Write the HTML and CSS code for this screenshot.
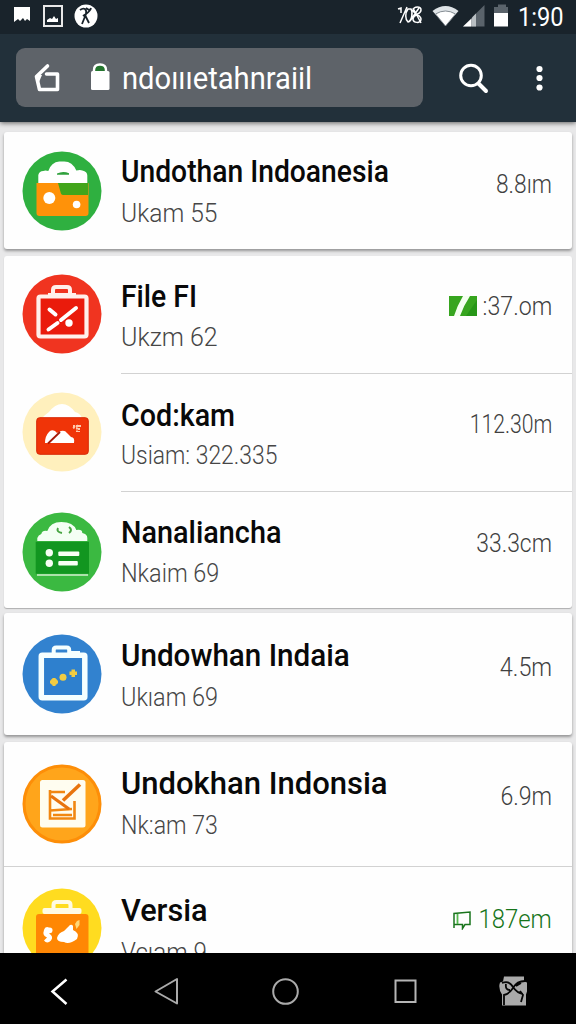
FILE: index.html
```
<!DOCTYPE html>
<html lang="id">
<head>
<meta charset="utf-8">
<title>Undothan Indoanesia</title>
<link rel="stylesheet" href="styles.css">
</head>
<body>
<div class="phone">
  <header class="top">
    <div class="status">
      <svg class="status-left" width="100" height="34" viewBox="0 0 100 34">
        <path fill="#fff" d="M14 7h16v14l-3-2-2 2-2-3-3 3-2-2-4 3z"/>
        <path fill="none" stroke="#e8e8e8" stroke-width="2" d="M44 6h18v20H44z"/>
        <path fill="#fff" d="M47 22v-2l3-2 2 1 2-3 2 3 2-1v4z"/>
        <circle cx="86" cy="16" r="11.500" fill="#fff"/>
        <path fill="none" stroke="#18222a" stroke-width="1.800" d="M80 10c4-3 7-1 6 4l-4 10M91 8c-1 4-4 5-8 8M85 15l4 8M86 8l3 2"/>
      </svg>
      <svg class="status-right" width="112" height="34" viewBox="396 0 112 34">
        <path fill="none" stroke="#fff" stroke-width="1.500" d="M398 9l3-1v5M407 7l-7 16M408 9c-3 4-3 10 0 13 4-1 5-10 3-13zM413 10c1-4 8-4 8 0 0 5-8 4-8 9 0 4 8 5 8 0 0-4-8-5-8-9M410 21l9-13M413 8l8 15"/>
        <path fill="#dfe4e7" d="M432.500 11Q445.500 1 458.500 11L445.500 26z"/>
        <path fill="#fff" stroke="#68727a" stroke-width=".8" d="M435.500 14Q445.500 8 455.500 14L445.500 26z"/>
        <path fill="#5a636b" d="M463 26.500L484.500 5v21.500z"/>
        <path fill="#fff" d="M463 26.500l8.500-8v8z"/>
        <path fill="#b9bfc3" d="M472 26.500v-9l4-4v13z"/>
        <path fill="#5a636b" d="M494 7h4V4.500h8V7h4v7h-16z"/>
        <path fill="#fff" d="M494 13h15.500v13.500H494z"/>
      </svg>
      <span class="clock"><span class="sx">1:90</span></span>
    </div>
    <div class="toolbar">
      <div class="address">
        <svg class="address-icons" width="100" height="59" viewBox="16 48 100 59">
          <path fill="none" stroke="#fff" stroke-width="3.600" stroke-linecap="round" stroke-linejoin="round" d="M47.500 66L36.500 76.500L39.500 89.500H57.500V74H46.500"/>
          <path fill="#fff" d="M36 75h6l-3 7z"/>
          <path fill="#25762f" d="M95 72v-3q0-4 5-4t5 4v3z"/>
          <path fill="none" stroke="#fff" stroke-width="2.400" d="M94 73v-3q0-5.500 6-5.500t6 5.500v3"/>
          <rect x="91" y="71" width="18.500" height="19" rx="1.500" fill="#fff"/>
        </svg>
        <span class="url"><span class="sx">ndoıııetahnraiil</span></span>
      </div>
      <svg class="tools" width="153" height="58" viewBox="423 48 153 58">
        <circle cx="471" cy="75.500" r="10.300" fill="none" stroke="#fff" stroke-width="3"/>
        <path stroke="#fff" stroke-width="4" stroke-linecap="round" d="M479 84l7 7"/>
        <g fill="#fff"><circle cx="539.500" cy="69" r="3.100"/><circle cx="539.500" cy="78" r="3.100"/><circle cx="539.500" cy="87.500" r="3.100"/></g>
      </svg>
    </div>
  </header>

  <main class="list">
    <section class="card card-a">
      <article class="row r1">
        <svg class="icon" viewBox="0 0 80 80">
          <circle cx="40" cy="40" r="39.500" fill="#2fb040"/>
          <path fill="#fff" d="M16.300 32v-8q1-4 5-4 2-1 5 0 3-9 11-9.500h5q8 0 12 9 4-1 6 0 5 1 5 5V32z"/>
          <path fill="#2fa13c" d="M35 22.500q6-3 12-.3v1.500H35z"/>
          <path fill="#ff9209" d="M14.500 32h52v30q0 3-3 3h-46q-3 0-3-3z"/>
          <path fill="#42a51b" d="M36 32h30v12H41q-2 0-2.500-3z"/>
          <circle cx="27.300" cy="47" r="6" fill="#fff"/><circle cx="54.600" cy="53.500" r="3.800" fill="#fff"/>
        </svg>
        <div class="text"><h2 class="title"><span class="sx">Undothan Indoanesia</span></h2><p class="sub"><span class="sx">Ukam 55</span></p></div>
        <div class="value"><span class="sx">8.8ım</span></div>
      </article>
    </section>

    <section class="card card-b">
      <article class="row r2">
        <svg class="icon" viewBox="0 0 80 80">
          <circle cx="40" cy="40" r="39.500" fill="#f03420"/>
          <rect x="16.500" y="22.500" width="48" height="40" rx="2" fill="#ea1b0c" stroke="#fff0eb" stroke-width="4.200"/>
          <path fill="none" stroke="#fff0eb" stroke-width="4" d="M26 21h28M31 20v-4q0-3 3-3h11q3 0 3 3v4"/>
          <path fill="none" stroke="#fff" stroke-width="4" stroke-linecap="round" d="M27.500 35.500l6 5M54 34L39 46M35.500 49L26.500 55.500"/>
          <circle cx="47" cy="49" r="3.700" fill="#fff"/>
        </svg>
        <div class="text"><h2 class="title"><span class="sx">File FI</span></h2><p class="sub"><span class="sx">Ukzm 62</span></p></div>
        <div class="value"><svg class="badge" width="28" height="20" viewBox="0 0 28 20"><path fill="#37a51f" d="M0 0h28v20H0z"/><path fill="#279618" d="M28 4v16H17z"/><path fill="#f4fff0" d="M14 0h7Q15 9 11 20H5Q8 10 14 0z"/></svg><span class="sx">:37.om</span></div>
      </article>
      <article class="row r3">
        <svg class="icon" viewBox="0 0 80 80">
          <circle cx="40" cy="40" r="39.500" fill="#fff0bd"/>
          <path fill="#fff" d="M20 26q4-4 7-6 6-8 13-8t13 8q5 1 7 6z"/>
          <rect x="14.700" y="25.700" width="51.600" height="36.600" rx="3" fill="#f03408" stroke="#d72807"/>
          <path fill="#fff" d="M23 51q0-7 4-11 2-3 6-1l2 2 4-2q4-1 6 2l4 4q4 0 3 6z"/>
          <path stroke="#a51909" stroke-width="1.800" d="M26 51.500L38 40"/>
          <path fill="none" stroke="#ffc8ac" stroke-width="2" stroke-dasharray="2 1" d="M51 36l4-2v6M57 33v7M51 34h8"/>
        </svg>
        <div class="text"><h2 class="title"><span class="sx">Cod:kam</span></h2><p class="sub"><span class="sx">Usiam: 322.335</span></p></div>
        <div class="value"><span class="sx">112.30m</span></div>
      </article>
      <article class="row r4">
        <svg class="icon" viewBox="0 0 80 80">
          <circle cx="40" cy="40" r="39.500" fill="#3bb941"/>
          <path fill="#f4fff4" d="M15.300 29v-3q1-3 4-4 1-4 6-3 3-9 14-9 12 0 15 8 6-1 6 3 5 1 5 5v3z"/>
          <path fill="none" stroke="#48a542" stroke-width="2" d="M36 16q-2 4 4 5M47 15q4 3 0 6"/>
          <path fill="#129620" d="M13.700 29.700H67v32H13.700z"/>
          <path stroke="#d5efcf" stroke-width="1.600" d="M15 63h51"/>
          <g fill="#f7fff4"><circle cx="27.300" cy="40.700" r="3.700"/><circle cx="27.300" cy="51.300" r="3.700"/><rect x="36.300" y="39.500" width="21" height="4.500" rx="1"/><rect x="36.300" y="49" width="19.500" height="4.500" rx="1"/></g>
        </svg>
        <div class="text"><h2 class="title"><span class="sx">Nanaliancha</span></h2><p class="sub"><span class="sx">Nkaim 69</span></p></div>
        <div class="value"><span class="sx">33.3cm</span></div>
      </article>
    </section>

    <section class="card card-c">
      <article class="row r5">
        <svg class="icon" viewBox="0 0 80 80">
          <circle cx="40" cy="40" r="39.500" fill="#3282cf"/>
          <rect x="19.300" y="21.300" width="43.500" height="42.500" rx="1" fill="#2e80ce" stroke="#f5ffff" stroke-width="5.500" stroke-linejoin="round"/>
          <path fill="none" stroke="#f5ffff" stroke-width="4" d="M31.700 19v-3q0-2.500 2.500-2.500h10.500q2.500 0 2.500 2.500v3M46 19h12"/>
          <g fill="#f1cc43"><rect x="28.800" y="44.600" width="6.400" height="6.400" rx="2.500"/><circle cx="41" cy="43.200" r="3.500"/><path d="M49.500 35.500h3.500v2h2v3.500h-2v2h-3.500v-2h-2v-3.500h2z"/><path d="M30.500 44h3v8h-3zM28 46.500h8v3h-8z"/></g>
        </svg>
        <div class="text"><h2 class="title"><span class="sx">Undowhan Indaia</span></h2><p class="sub"><span class="sx">Ukıam 69</span></p></div>
        <div class="value"><span class="sx">4.5m</span></div>
      </article>
    </section>

    <section class="card card-d">
      <article class="row r6">
        <svg class="icon" viewBox="0 0 80 80">
          <circle cx="40" cy="40" r="38" fill="#ffa51b" stroke="#fd8e08" stroke-width="3"/>
          <rect x="18" y="16" width="45.500" height="47.500" rx="2.500" fill="#fffdf0"/>
          <g fill="none" stroke="#f18712" stroke-width="2.600"><path d="M28 26v28.500h24.500V37M28 28h15M28 46.500l22-1.500M31 51h19"/><path stroke="#e8740e" stroke-width="3.200" d="M29 32l18 13"/><path stroke="#e8740e" stroke-width="3.600" d="M41 36.500L58 20.500"/></g>
        </svg>
        <div class="text"><h2 class="title"><span class="sx">Undokhan Indonsia</span></h2><p class="sub"><span class="sx">Nk:am 73</span></p></div>
        <div class="value"><span class="sx">6.9m</span></div>
      </article>
      <article class="row r7">
        <svg class="icon" viewBox="0 0 80 80">
          <circle cx="40" cy="40" r="39.500" fill="#ffdc20"/>
          <path fill="#ff8704" d="M14 29q0-3 3-3h46.500q3 0 3 3v51H14z"/>
          <rect x="20.500" y="20" width="39" height="6" rx="2" fill="#fffbe5"/>
          <path fill="none" stroke="#fffbe5" stroke-width="4" d="M31.500 21v-4q0-3 3-3h11q3 0 3 3v4"/>
          <path fill="#fff" d="M22 42q1-4 5-2.500 5 0 3 5l-3 1q5 3 2 7-4 4-7 0l3-3q-5-2-3-7.500zM35 50q1-5 7-7l6-6q2-1 3 1v4q7 3 4 9-8 6-13 3-7 0-7-4z"/>
          <path fill="#ffd878" d="M53 36l2-3 2.500-1v5l-3 4z"/>
        </svg>
        <div class="text"><h2 class="title"><span class="sx">Versia</span></h2><p class="sub"><span class="sx">Vcıam 9</span></p></div>
        <div class="value green"><svg class="bubble" width="19" height="20" viewBox="0 0 19 20"><path fill="none" stroke="#19741c" stroke-width="1.500" d="M1 18V3.500L17 2v12.500h-5l-2.500 4v-4H1"/><path fill="none" stroke="#55b94e" stroke-width="1.800" d="M4.500 4v10"/></svg><span class="sx">187em</span></div>
      </article>
    </section>
  </main>

  <nav class="navbar">
    <svg width="576" height="71" viewBox="0 953 576 71" fill="none">
      <path stroke="#fff" stroke-width="2.500" d="M66.500 979.500L52.500 991.500l14 12.500"/>
      <path stroke="#aaa" stroke-width="2" stroke-linejoin="round" d="M177 979v24.500L155.500 991.500z"/>
      <circle cx="285.500" cy="991.500" r="12.300" stroke="#aaa" stroke-width="2"/>
      <path stroke="#b5b5b5" stroke-width="2" d="M395.500 980.500h20v21.500h-20z"/>
      <path fill="#aaa" d="M504 976.500h20v5l3 1v9l-1 3v11h-24v-11q-4-6-2-12l3-1z"/>
      <path stroke="#050505" stroke-width="1.800" d="M502 983q7-3 11 4 4 6 10 7M525 981q-8 0-12 7-4 6-9 7v10M506 984q-1 6 4 6M520 991l3 4-2 7M516 986l5-3"/>
    </svg>
  </nav>
</div>
</body>
</html>
```
FILE: styles.css
```
* { box-sizing: border-box; }
body { margin: 0; font-family: Roboto, "Liberation Sans", sans-serif; }
svg { display: block; flex: none; }
h2, p { margin: 0; }

.phone { width: 576px; height: 1024px; display: flex; flex-direction: column; overflow: hidden; background: #e8e8e9; }
.top { flex: none; height: 122px; background: #22303a; box-shadow: 0 1px 5px rgba(0, 0, 0, .6); z-index: 1; }
.status { height: 34px; display: flex; background: #19232b; color: #fff; }
.status-right { margin-left: 296px; margin-right: 10px; }
.clock { font-size: 26px; line-height: 34px; white-space: nowrap; }
.clock .sx { transform: scaleX(.91); }
.toolbar { display: flex; padding: 14px 0 0 16px; }
.address { width: 407px; height: 59px; display: flex; border-radius: 9px; background: #5e6369; color: #fff; }
.url { margin-left: 6px; font-size: 31px; line-height: 61px; white-space: nowrap; }
.url .sx { transform: scaleX(.94); }

.list { flex: 1; min-height: 0; overflow: hidden; padding: 10px 4px 0; }
.card { background: #fefefe; border-radius: 3px; box-shadow: 0 2px 3px rgba(0, 0, 0, .36); }
.card-a { margin-bottom: 7px; }
.card-b { margin-bottom: 5px; box-shadow: 0 1px 1px rgba(0, 0, 0, .25); }
.card-c { margin-bottom: 7px; }

.row { display: flex; padding: 0 20px 0 18px; position: relative; }
.icon { width: 80px; height: 80px; }
.text { flex: 1; margin-left: 19px; }
.title { font-size: 31px; line-height: 36px; font-weight: 500; color: #090909; white-space: nowrap; }
.sub { margin-top: 8px; font-size: 26px; line-height: 30px; font-weight: 300; color: #464646; white-space: nowrap; }
.value { display: flex; font-size: 26px; line-height: 30px; font-weight: 300; color: #404040; white-space: nowrap; }
.sx { display: inline-block; transform-origin: left; }
.value .sx { transform-origin: right; }
.value.green { color: #16751a; }
.badge { margin: 5px -3px 0 0; }
.bubble { margin: 6px 0 0; }

.r1 { height: 117px; }
.r1 .icon { margin-top: 19px; }
.r1 .text { margin-top: 22px; }
.r1 .value { margin-top: 37px; }
.r1 .title .sx { transform: scaleX(.911); }
.r1 .sub .sx { transform: scaleX(.945); }
.r1 .value .sx { transform: scaleX(.875); }

.r2 { height: 118px; }
.r2 .icon { margin-top: 18px; }
.r2 .text { margin-top: 23px; }
.r2 .value { margin-top: 35px; }
.r2 .sub { margin-top: 7px; }
.r2 .title .sx { transform: scaleX(.915); }
.r2 .sub .sx { transform: scaleX(.96); }
.r2 .value .sx { transform: scaleX(.89); }

.r3 { height: 118px; }
.r3 .icon { margin-top: 18px; }
.r3 .text { margin-top: 24px; }
.r3 .value { margin-top: 35px; }
.r3 .sub { margin-top: 6px; }
.r3 .title .sx { transform: scaleX(.925); }
.r3 .sub .sx { transform: scaleX(.88); }
.r3 .value .sx { transform: scaleX(.815); }

.r4 { height: 116px; }
.r4 .icon { margin-top: 20px; }
.r4 .text { margin-top: 23px; }
.r4 .value { margin-top: 36px; }
.r4 .sub { margin-top: 7px; }
.r4 .title .sx { transform: scaleX(.93); }
.r4 .sub .sx { transform: scaleX(.9); }
.r4 .value .sx { transform: scaleX(.88); }

.r5 { height: 122px; }
.r5 .icon { margin-top: 21px; }
.r5 .text { margin-top: 25px; }
.r5 .value { margin-top: 39px; }
.r5 .title .sx { transform: scaleX(.956); }
.r5 .sub .sx { transform: scaleX(.9); }
.r5 .value .sx { transform: scaleX(.9); }

.r6 { height: 125px; }
.r6 .icon { margin-top: 22px; }
.r6 .text { margin-top: 24px; }
.r6 .value { margin-top: 39px; }
.r6 .sub .sx { transform: scaleX(.89); }
.r6 .value .sx { transform: scaleX(.89); }

.r7 { height: 118px; }
.r7 .icon { margin-top: 21px; }
.r7 .text { margin-top: 26px; }
.r7 .value { margin-top: 37px; }
.r7 .title .sx { transform: scaleX(.99); }
.r7 .sub .sx { transform: scaleX(.93); }
.r7 .value .sx { transform: scaleX(.92); }

.r2::after, .r3::after, .r6::after { content: ""; position: absolute; left: 117px; right: 0; bottom: 0; height: 1.5px; background: #d2d2d2; }
.r6::after { left: 0; }

.navbar { flex: none; height: 71px; background: #000; z-index: 1; }
```
